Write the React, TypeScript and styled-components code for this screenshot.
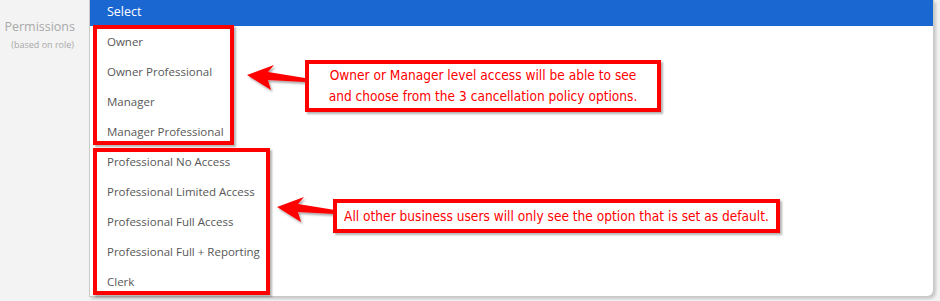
import React, { FC } from 'react';
import styled, { createGlobalStyle } from 'styled-components';

const GlobalStyle = createGlobalStyle`
  html, body {
    margin: 0;
    padding: 0;
    background: #f3f3f3;
  }
`;

const Page = styled.div`
  position: relative;
  width: 940px;
  height: 301px;
  overflow: hidden;
  display: flex;
  background: #f3f3f3;
  font-family: 'Open Sans', 'Liberation Sans', sans-serif;
`;

const LabelColumn = styled.div`
  width: 89px;
  padding-top: 18px;
  padding-right: 14px;
  box-sizing: border-box;
  display: flex;
  flex-direction: column;
  align-items: flex-end;
  color: #a9a9a9;
`;

const LabelTitle = styled.div`
  font-size: 12.5px;
  line-height: 18px;
`;

const LabelHint = styled.div`
  font-size: 9px;
  line-height: 14px;
  margin-top: 2px;
  margin-right: 1px;
`;

const Panel = styled.div`
  width: 845px;
  height: 297px;
  background: #fff;
  border: 1px solid #c9c9c9;
  border-top: none;
  border-radius: 0 0 7px 0;
  box-shadow: 2px 2px 3px rgba(0, 0, 0, 0.18);
  box-sizing: border-box;
  overflow: hidden;
`;

const Header = styled.div`
  height: 26px;
  background: #1a67d2;
  color: #fff;
  font-size: 12.5px;
  line-height: 24px;
  padding-left: 17px;
`;

const OptionList = styled.ul`
  list-style: none;
  margin: 0;
  padding: 0;
`;

const Option = styled.li`
  height: 30px;
  line-height: 31px;
  padding-left: 17px;
  font-size: 11.5px;
  color: #575757;
`;

const Frame = styled.div<{ $x: number; $y: number; $w: number; $h: number }>`
  position: absolute;
  left: ${(p) => p.$x}px;
  top: ${(p) => p.$y}px;
  width: ${(p) => p.$w}px;
  height: ${(p) => p.$h}px;
  border: 4px solid #ff0000;
  box-sizing: border-box;
  box-shadow: 2px 2px 2px rgba(0, 0, 0, 0.3);
`;

const Callout = styled(Frame)`
  background: #fff;
  color: #ff0000;
  font-family: 'DejaVu Sans Condensed', 'Liberation Sans', sans-serif;
  font-size: 13.6px;
  line-height: 21px;
  display: flex;
  flex-direction: column;
  align-items: center;
  justify-content: center;
  white-space: nowrap;
`;

const ArrowWrap = styled.svg<{ $x: number; $y: number }>`
  position: absolute;
  left: ${(p) => p.$x}px;
  top: ${(p) => p.$y}px;
  overflow: visible;
`;

const Arrow: FC<{ x: number; y: number }> = ({ x, y }) => (
  <ArrowWrap $x={x} $y={y} width="60" height="32" viewBox="0 0 60 32">
    <defs>
      <filter id={`sh${x}`} x="-20%" y="-30%" width="150%" height="180%">
        <feDropShadow dx="1.5" dy="2" stdDeviation="1.2" floodColor="#000" floodOpacity="0.35" />
      </filter>
    </defs>
    <polygon
      points="0,12 27,2 21,9 58,15 58,19 21,17 24,27"
      fill="#ff0000"
      filter={`url(#sh${x})`}
    />
  </ArrowWrap>
);

const topOptions = ['Owner', 'Owner Professional', 'Manager', 'Manager Professional'];
const otherOptions = [
  'Professional No Access',
  'Professional Limited Access',
  'Professional Full Access',
  'Professional Full + Reporting',
  'Clerk',
];

const App: FC = () => (
  <>
    <GlobalStyle />
    <Page>
      <LabelColumn>
        <LabelTitle>Permissions</LabelTitle>
        <LabelHint>(based on role)</LabelHint>
      </LabelColumn>
      <Panel>
        <Header>Select</Header>
        <OptionList>
          {[...topOptions, ...otherOptions].map((o) => (
            <Option key={o}>{o}</Option>
          ))}
        </OptionList>
      </Panel>

      <Frame $x={93} $y={25} $w={141} $h={120} />
      <Frame $x={93} $y={148} $w={177} $h={147} />

      <Arrow x={247} y={63} />
      <Callout $x={305} $y={60} $w={356} $h={52}>
        <span>Owner or Manager level access will be able to see</span>
        <span>and choose from the 3 cancellation policy options.</span>
      </Callout>

      <Arrow x={277} y={195} />
      <Callout $x={333} $y={199} $w={447} $h={34}>
        <span>All other business users will only see the option that is set as default.</span>
      </Callout>
    </Page>
  </>
);

export default App;
